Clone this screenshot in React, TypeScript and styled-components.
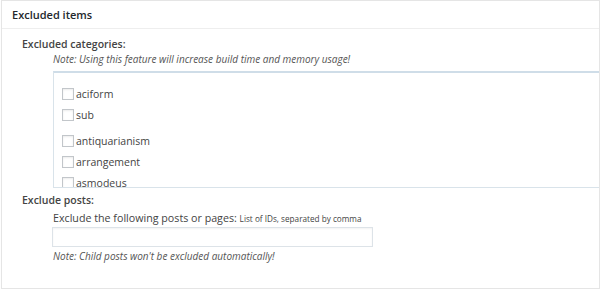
import { ReactElement } from "react";
import styled, { createGlobalStyle } from "styled-components";

const GlobalStyle = createGlobalStyle`
  html, body {
    margin: 0;
    padding: 0;
    background: #ffffff;
    font-family: "Open Sans", "Noto Sans", sans-serif;
    color: #444444;
  }
`;

const Postbox = styled.div`
  box-sizing: border-box;
  margin-left: 1px;
  width: 599px;
  height: 289px;
  border: 1px solid #e5e5e5;
  box-shadow: 0 1px 1px rgba(0, 0, 0, 0.04);
  background: #ffffff;
  overflow: hidden;
`;

const Header = styled.h2`
  margin: 0;
  height: 27px;
  padding: 0 10px;
  display: flex;
  align-items: center;
  border-bottom: 1px solid #eeeeee;
  font-size: 11px;
  font-weight: 600;
  color: #23282d;
`;

const Inside = styled.div`
  padding: 8px 0 0 20px;
`;

const Label = styled.div`
  font-size: 10.5px;
  font-weight: 600;
  color: #444444;
  line-height: 15px;
`;

const Indented = styled.div`
  margin-left: 31px;
`;

const Note = styled.div<{ top?: number }>`
  font-size: 10px;
  font-style: italic;
  color: #555555;
  line-height: 14px;
  margin-top: ${({ top }) => (top ? `${top}px` : "0")};
`;

const CheckList = styled.div`
  box-sizing: border-box;
  width: 570px;
  height: 117px;
  margin-top: 5px;
  border: 1px solid #d9e3ea;
  border-top: 2px solid #cfdde8;
  overflow: hidden;
  padding: 10px 0 0 8px;
`;

const Item = styled.label<{ gap?: number }>`
  display: flex;
  align-items: center;
  height: 21px;
  margin-top: ${({ gap }) => (gap ? `${gap}px` : "0")};
  font-size: 10.5px;
  color: #444444;
`;

const Box = styled.span`
  box-sizing: border-box;
  width: 12px;
  height: 12px;
  margin-right: 2px;
  border: 1px solid #c2c6ca;
  box-shadow: inset 0 1px 2px rgba(0, 0, 0, 0.08);
  background: #ffffff;
`;

const PostsLabel = styled(Label)`
  margin-top: 5px;
`;

const Field = styled.div`
  margin-top: 3px;
  font-size: 10.7px;
  line-height: 14px;
  color: #444444;
`;

const Small = styled.span`
  font-size: 8.2px;
`;

const Input = styled.div`
  box-sizing: border-box;
  width: 321px;
  height: 20px;
  margin-top: 1px;
  margin-left: -1px;
  border: 1px solid #dde3e8;
  box-shadow: inset 0 1px 2px rgba(0, 0, 0, 0.05);
`;

const categories = [
  { name: "aciform" },
  { name: "sub" },
  { name: "antiquarianism", gap: 5 },
  { name: "arrangement" },
  { name: "asmodeus" },
];

export default function App(): ReactElement {
  return (
    <>
      <GlobalStyle />
      <Postbox>
        <Header>Excluded items</Header>
        <Inside>
          <Label>Excluded categories:</Label>
          <Indented>
            <Note>
              Note: Using this feature will increase build time and memory
              usage!
            </Note>
            <CheckList>
              {categories.map((c) => (
                <Item key={c.name} gap={c.gap}>
                  <Box />
                  {c.name}
                </Item>
              ))}
            </CheckList>
          </Indented>
          <PostsLabel>Exclude posts:</PostsLabel>
          <Indented>
            <Field>
              Exclude the following posts or pages:{" "}
              <Small>List of IDs, separated by comma</Small>
            </Field>
            <Input />
            <Note top={2}>Note: Child posts won't be excluded automatically!</Note>
          </Indented>
        </Inside>
      </Postbox>
    </>
  );
}
